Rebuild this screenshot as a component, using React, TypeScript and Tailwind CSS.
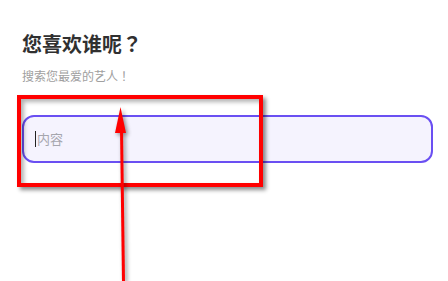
export default function App() {
  return (
    <div className="relative h-[281px] w-[448px] overflow-hidden bg-white font-['Noto_Sans_CJK_SC',sans-serif]">
      <div className="pl-[22px] pr-[15px] pt-[30px]">
        <h1 className="text-[20px] font-bold leading-7 text-[#303030]">
          您喜欢谁呢<span className="font-['Noto_Sans_CJK_TC',sans-serif]">？</span>
        </h1>
        <p className="mt-[10px] text-[12px] leading-4 text-[#a0a0a0]">
          搜索您最爱的艺人<span className="font-['Noto_Sans_CJK_TC',sans-serif]">！</span>
        </p>
        <div className="mt-[31px] flex h-[48px] items-center rounded-[12px] border-2 border-[#6a4ff2] bg-[#f5f3fe] pl-[11px]">
          <span className="h-[16px] w-px bg-[#222]" />
          <span className="ml-px text-[13px] text-[#a6a6ae]">内容</span>
        </div>
      </div>

      {/* annotation overlay */}
      <div className="absolute left-[17px] top-[95px] h-[92px] w-[246px] border-4 border-[#ff0000] shadow-[3px_3px_4px_rgba(0,0,0,0.45),inset_3px_3px_4px_rgba(0,0,0,0.3)]" />
      <svg
        className="absolute left-0 top-0 drop-shadow-[2px_2px_2px_rgba(0,0,0,0.45)]"
        width="448"
        height="281"
        viewBox="0 0 448 281"
      >
        <line x1="121.5" y1="128" x2="123.5" y2="281" stroke="#ff0000" strokeWidth="3" />
        <path d="M120.5 107 L126 133 L115 133 Z" fill="#ff0000" />
      </svg>
    </div>
  );
}
